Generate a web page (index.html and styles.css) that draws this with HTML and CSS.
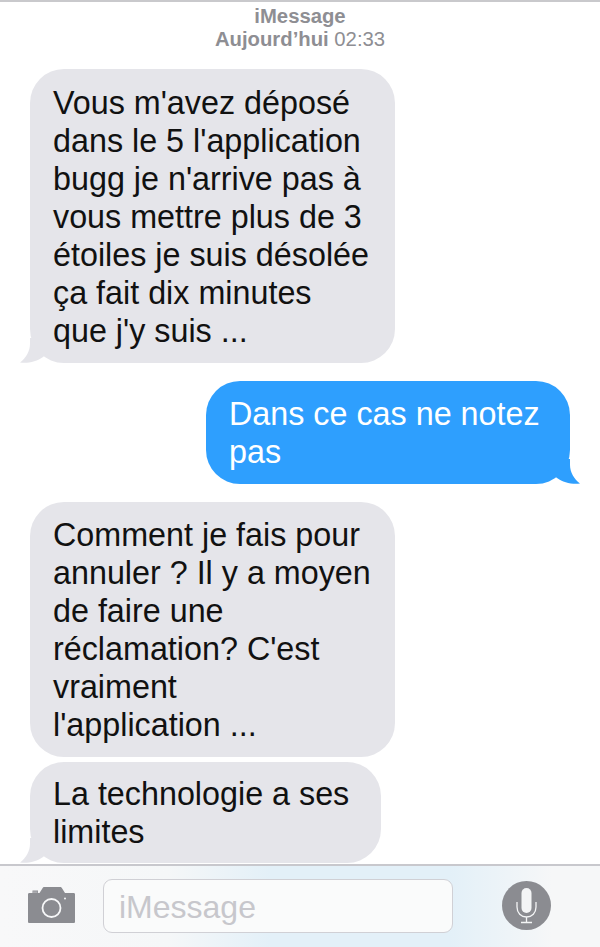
FILE: index.html
```html
<!DOCTYPE html>
<html lang="fr">
<head>
<meta charset="utf-8">
<title>iMessage</title>
<link rel="stylesheet" href="styles.css">
</head>
<body>
<div class="screen">
  <main class="thread">
    <header class="meta">
      <div class="service">iMessage</div>
      <div class="date"><b>Aujourd’hui</b> 02:33</div>
    </header>
    <div class="bubble in wide first">
      <p>Vous m'avez déposé<br>dans le 5 l'application<br>bugg je n'arrive pas à<br>vous mettre plus de 3<br>étoiles je suis désolée<br>ça fait dix minutes<br>que j'y suis ...</p>
      <svg class="tail tail-in" viewBox="0 0 34 26"><path d="M10 0V6C10 13 6 20 0 24.500C8 25.500 17 23.500 23 19L34 10V0Z"/></svg>
    </div>
    <div class="bubble out">
      <p>Dans ce cas ne notez<br>pas</p>
      <svg class="tail tail-out" viewBox="0 0 34 26"><path d="M24 0V6C24 13 28 20 34 24.500C26 25.500 17 23.500 11 19L0 10V0Z"/></svg>
    </div>
    <div class="bubble in wide second">
      <p>Comment je fais pour<br>annuler ? Il y a moyen<br>de faire une<br>réclamation? C'est<br>vraiment<br>l'application ...</p>
    </div>
    <div class="bubble in narrow third">
      <p>La technologie a ses<br>limites</p>
      <svg class="tail tail-in" viewBox="0 0 34 26"><path d="M10 0V6C10 13 6 20 0 24.500C8 25.500 17 23.500 23 19L34 10V0Z"/></svg>
    </div>
  </main>
  <footer class="composer">
    <svg class="camera" width="47" height="36" viewBox="0 0 47 36">
      <path fill="#8b8c91" d="M1.500 6H4.500V3.500H10V6H11.500L14.500 1.200C14.900 .4 15.500 0 16.500 0H32C33 0 33.600 .4 34 1.200L37 6H45.500C46.500 6 47 6.500 47 7.500V34.500C47 35.500 46.500 36 45.500 36H1.500C.5 36 0 35.500 0 34.500V7.500C0 6.500 .5 6 1.500 6Z"/>
      <circle cx="23.500" cy="21" r="9" fill="none" stroke="#f7f8f9" stroke-width="1.800"/>
      <circle cx="37" cy="11.500" r="1" fill="#f7f8f9"/>
      <rect x="5" y="4.600" width="4.500" height="1" fill="#f7f8f9" opacity=".5"/>
    </svg>
    <div class="field">iMessage</div>
    <svg class="mic" width="49" height="49" viewBox="0 0 49 49">
      <circle cx="24.500" cy="24.500" r="24.500" fill="#8b8c91"/>
      <rect x="19.500" y="7" width="10" height="25" rx="5" fill="#f4f5f6"/>
      <path d="M15 21V26C15 32 19 36 24.500 36S34 32 34 26V21M24.500 36V41.500M19 41.500H30" fill="none" stroke="#f4f5f6" stroke-width="1.300"/>
    </svg>
  </footer>
</div>
</body>
</html>
```
FILE: styles.css
```css
* { box-sizing: border-box; }
html, body { margin: 0; padding: 0; background: #fff; }
.screen {
  width: 600px;
  height: 947px;
  display: flex;
  flex-direction: column;
  overflow: hidden;
  font-family: "Liberation Sans", Arial, sans-serif;
  border-top: 2px solid #c9c9cc;
}
.thread { height: 862px; flex: none; display: flex; flex-direction: column; overflow: hidden; }
.meta {
  height: 67px;
  flex: none;
  padding-top: 3px;
  text-align: center;
  color: #8e8e93;
  font-size: 20.300px;
  line-height: 23px;
}
.service { font-weight: 700; }
.date { font-weight: 400; }
.date b { font-weight: 700; }
.bubble {
  position: relative;
  flex: none;
  border-radius: 34px;
  font-size: 32.300px;
  line-height: 38px;
}
.bubble p { margin: 0; position: relative; z-index: 1; white-space: nowrap; }
.in { background: #e5e5ea; color: #111; margin-left: 30px; padding: 14px 23px; }
.wide { width: 365px; }
.narrow { width: 351px; }
.first { height: 294px; padding-top: 15px; }
.second { height: 255px; margin-top: 18px; }
.third { height: 101px; margin-top: 5px; padding-top: 13px; }
.out {
  background: #2e9ffe;
  color: #fff;
  width: 364px;
  height: 103px;
  margin: 18px 0 0 206px;
  padding: 14px 23px;
}
.tail { position: absolute; bottom: -1px; width: 34px; height: 26px; }
.tail-in { left: -10px; fill: #e5e5ea; }
.tail-out { right: -10px; fill: #2e9ffe; }
.composer {
  flex: 1;
  display: flex;
  align-items: flex-start;
  background: linear-gradient(90deg, #f8f8f9 0%, #f5f7f8 28%, #e3f0f8 45%, #e3f0f8 75%, #f6f7f8 92%);
  border-top: 2px solid #c8c8cd;
}
.camera { margin: 21px 0 0 28px; flex: none; }
.field {
  margin: 13px 0 0 28px;
  width: 350px;
  height: 54px;
  flex: none;
  background: #fafbfb;
  border: 1px solid #d0d0d5;
  border-radius: 9px;
  padding-left: 15px;
  color: #c7c7cc;
  font-size: 32px;
  line-height: 54px;
}
.mic { margin: 15px 0 0 49px; flex: none; }
```
